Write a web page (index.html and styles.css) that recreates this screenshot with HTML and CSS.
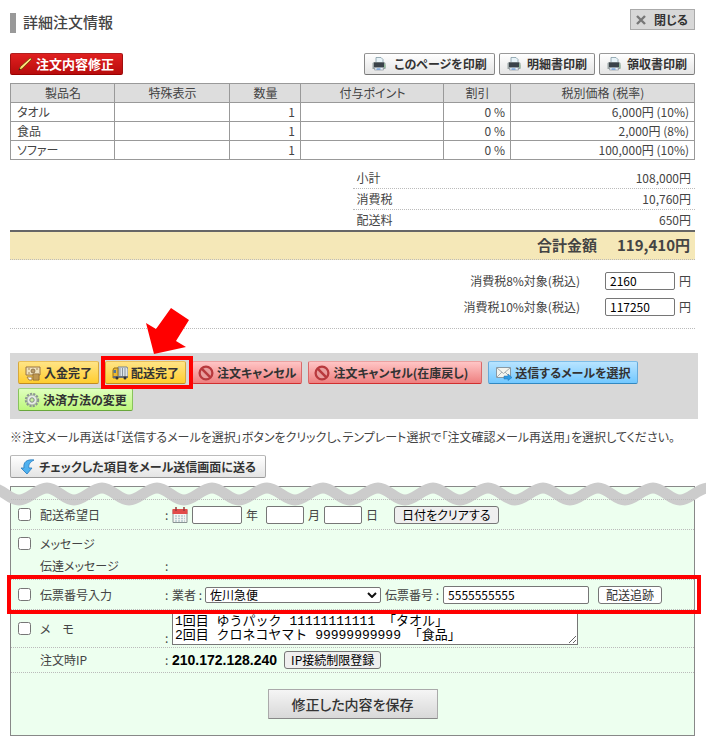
FILE: index.html
```html
<!DOCTYPE html>
<html lang="ja">
<head>
<meta charset="utf-8">
<meta name="viewport" content="width=device-width, initial-scale=1">
<title>詳細注文情報</title>
<link rel="stylesheet" href="styles.css">
</head>
<body>
<svg class="defs" aria-hidden="true">
  <defs>
    <symbol id="printer" viewBox="0 0 14 14">
      <path d="M4 .500h5l2 2V6H4z" fill="#e8f3f8" stroke="#8299a5" stroke-width=".8"/>
      <path d="M.500 6l1.500-1h10l1.500 1v6H.500z" fill="#9aa3a4"/>
      <path d="M2 5.500h10V10H2z" fill="#3a4249"/>
      <path d="M12 6l1.500 2v3H12z" fill="#91b899"/>
      <path d="M3 10.500h8l.5 2.500h-9z" fill="#eef3f6" stroke="#7c8790" stroke-width=".6"/>
      <path d="M4.500 12h4" stroke="#4182d6"/>
    </symbol>
    <symbol id="stop" viewBox="0 0 14 14">
      <circle cx="7" cy="7" r="5.600" fill="#e99d9d" stroke="#b8393d" stroke-width="2"/>
      <path d="M3 3l8 8" stroke="#b8393d" stroke-width="2.200"/>
    </symbol>
  </defs>
</svg>
<main class="page">
  <header class="head">
    <h1 class="title">詳細注文情報</h1>
    <button class="close" type="button"><svg class="close-icon" viewBox="0 0 10 10"><path d="M1 1l8 8M9 1L1 9" stroke="#777" stroke-width="2.400"/></svg>閉じる</button>
  </header>

  <div class="tools">
    <button class="btn red" type="button"><svg class="icon" viewBox="0 0 16 16"><path d="M2 14l1-3L13 2l2 1L5 13z" fill="#f3cd58" stroke="#70400a" stroke-width=".8"/><path d="M4 11.500L13.500 3" stroke="#fff09a"/><path d="M1.500 14.500l2-1-1-1z" fill="#222"/></svg>注文内容修正</button>
    <div class="prints">
      <button class="btn print print-page" type="button"><svg class="icon"><use href="#printer"/></svg>このページを印刷</button>
      <button class="btn print" type="button"><svg class="icon"><use href="#printer"/></svg>明細書印刷</button>
      <button class="btn print" type="button"><svg class="icon"><use href="#printer"/></svg>領収書印刷</button>
    </div>
  </div>

  <table class="items">
    <colgroup><col class="c-name"><col class="c-special"><col class="c-qty"><col class="c-point"><col class="c-off"><col></colgroup>
    <thead><tr><th>製品名</th><th>特殊表示</th><th>数量</th><th>付与ポイント</th><th>割引</th><th>税別価格 (税率)</th></tr></thead>
    <tbody>
      <tr><td>タオル</td><td></td><td>1</td><td></td><td>0 %</td><td>6,000円 (10%)</td></tr>
      <tr><td>食品</td><td></td><td>1</td><td></td><td>0 %</td><td>2,000円 (8%)</td></tr>
      <tr><td>ソファー</td><td></td><td>1</td><td></td><td>0 %</td><td>100,000円 (10%)</td></tr>
    </tbody>
  </table>

  <dl class="sums">
    <div><dt>小計</dt><dd>108,000円</dd></div>
    <div><dt>消費税</dt><dd>10,760円</dd></div>
    <div><dt>配送料</dt><dd>650円</dd></div>
  </dl>
  <div class="total"><span>合計金額</span><span>119,410円</span></div>

  <div class="taxes">
    <div class="tax"><label for="tax8">消費税8%対象(税込)</label><input class="field" id="tax8" value="2160">円</div>
    <div class="tax"><label for="tax10">消費税10%対象(税込)</label><input class="field" id="tax10" value="117250">円</div>
  </div>

  <section class="actions">
    <button class="btn yellow" type="button"><svg class="icon" viewBox="0 0 16 16"><path d="M1 2h14v8H1z" fill="#eee2bf" stroke="#987344"/><path d="M3 4h2m6 0h2M3 8h2" stroke="#a88754"/><circle cx="8" cy="6" r="2" fill="#b99c6b" stroke="#806036" stroke-width=".7"/><path d="M8 9h6v6H8z" fill="#d5ad5f" stroke="#916a30"/><path d="M8 11h6M8 13h6M2 12h5v3H4z" fill="#fff" stroke="#a78145"/></svg>入金完了</button>
    <span class="marked">
      <button class="btn yellow" type="button"><svg class="icon" viewBox="0 0 16 16"><path d="M6 2h9l1 2v8H6z" fill="#dce3e8" stroke="#77828b"/><path d="M8 3v8M10.500 3v8M13 3v8" stroke="#89949d"/><path d="M1 5l1-2h4v10H1z" fill="#ebb833" stroke="#93701d"/><path d="M1.500 5H4v3H1.500z" fill="#52779a"/><path d="M1 11h15v2H1z" fill="#6b7075"/><circle cx="5" cy="13" r="1.500" fill="#333"/><circle cx="13" cy="13" r="1.500" fill="#333"/></svg>配送完了</button>
      <svg class="arrow" viewBox="0 0 43 46"><path d="M25 0L43 12 30 33 40 39 8 46 0 15 10 21z" fill="#f00"/></svg>
    </span>
    <button class="btn pink" type="button"><svg class="icon"><use href="#stop"/></svg>注文キャンセル</button>
    <button class="btn pink restock" type="button"><svg class="icon"><use href="#stop"/></svg>注文キャンセル(在庫戻し)</button>
    <button class="btn blue" type="button"><svg class="icon" viewBox="0 0 16 16"><path d="M.500 2.500h14v10H.500z" fill="#f3f4ee" stroke="#8999a3"/><path d="M1 3l6.500 5.500L14 3M1 12l5-5m8 5L9 7" fill="none" stroke="#a4adb2"/><path d="M8 11h4V9l4 3.500-4 3V14H8z" fill="#2f9be3" stroke="#2175b5" stroke-width=".5"/></svg>送信するメールを選択</button>
    <button class="btn green" type="button"><svg class="icon" viewBox="0 0 16 16"><circle cx="8" cy="8" r="6.200" fill="none" stroke="#8b9592" stroke-width="2" stroke-dasharray="2.200 1.100"/><circle cx="8" cy="8" r="5" fill="#e7ebe8" stroke="#929b98" stroke-width=".8"/><circle cx="8" cy="8" r="2.200" fill="#c8f09c" stroke="#818b88"/></svg>決済方法の変更</button>
  </section>

  <p class="note">※注文メール再送は「送信するメールを選択」ボタンをクリックし、テンプレート選択で「注文確認メール再送用」を選択してください。</p>
  <button class="btn send" type="button"><svg class="icon" viewBox="0 0 16 16"><path d="M14 1C7 0 3 3 4 9H1l6 6 5-6H9C8 6 10 3 14 1z" fill="#4fb1ef" stroke="#2678bd" stroke-width=".8"/></svg>チェックした項目をメール送信画面に送る</button>

  <form class="form">
    <svg class="wave" preserveAspectRatio="none" viewBox="0 0 706 24"><path d="M-8 6C2 6 9 18 19 18S37 6 47 6 64 18 74 18 92 6 102 6 119 18 129 18 147 6 157 6 174 18 184 18 202 6 212 6 229 18 239 18 257 6 267 6 285 18 295 18 313 6 323 6 340 18 350 18 368 6 378 6 395 18 405 18 423 6 433 6 450 18 460 18 478 6 488 6 505 18 515 18 533 6 543 6 560 18 570 18 588 6 598 6 615 18 625 18 643 6 653 6 670 18 680 18 698 6 708 6"/></svg>
    <div class="row date">
      <input type="checkbox" id="k-date"><label for="k-date">配送希望日</label><span>:</span>
      <div class="value">
        <svg class="calendar" viewBox="0 0 16 16"><path d="M1 3h14v12.500H1z" fill="#f4f5f2" stroke="#8a9494"/><path d="M.500 2h15v5H.500z" fill="#e24b49"/><path d="M4 0v4M12 0v4" stroke="#943c3c" stroke-width="1.500"/><path d="M3 9h10M3 11.500h10M3 14h10" stroke="#b5cace" stroke-width="1.500" stroke-dasharray="2 1"/></svg>
        <input class="field year" aria-label="年">年<input class="field month" aria-label="月">月<input class="field day" aria-label="日">日
        <button class="plain clear" type="button">日付をクリアする</button>
      </div>
    </div>
    <div class="row message">
      <input type="checkbox" id="k-msg"><label for="k-msg">メッセージ</label>
      <span class="sub">伝達メッセージ</span><span class="sub-colon">:</span>
    </div>
    <div class="row slip">
      <input type="checkbox" id="k-slip"><label for="k-slip">伝票番号入力</label><span>:</span>
      <div class="value">
        <label for="carrier">業者 :</label>
        <span class="picker">
          <select class="carrier" id="carrier"><option>佐川急便</option></select>
          <svg class="chevron" viewBox="0 0 10 6"><path d="M1 1l4 4 4-4" fill="none" stroke="#111" stroke-width="2"/></svg>
        </span>
        <label for="number">伝票番号 :</label>
        <input class="field number" id="number" value="5555555555">
        <button class="plain track" type="button">配送追跡</button>
      </div>
    </div>
    <div class="row memo">
      <input type="checkbox" id="k-memo"><label for="k-memo">メ　モ</label><span class="low">:</span>
      <textarea class="memo-text" aria-label="メモ" rows="2">1回目 ゆうパック 11111111111 「タオル」
2回目 クロネコヤマト 99999999999 「食品」</textarea>
    </div>
    <div class="row ip">
      <span class="ip-label">注文時IP</span><span>:</span>
      <div class="value"><strong>210.172.128.240</strong><button class="plain" type="button">IP接続制限登録</button></div>
    </div>
    <div class="submit"><button class="save" type="button">修正した内容を保存</button></div>
  </form>
</main>
</body>
</html>
```
FILE: styles.css
```css
* { box-sizing: border-box; }

body {
  margin: 0;
  color: #444;
  background: #fff;
  font: 12px/18px "Noto Sans CJK JP", sans-serif;
  font-feature-settings: "palt";
}

button, input, select, textarea {
  margin: 0;
  font: inherit;
  font-feature-settings: inherit;
}

.defs { position: absolute; width: 0; height: 0; }

.page { padding: 9px 11px 7px 10px; }

.head {
  display: flex;
  justify-content: space-between;
  height: 44px;
}

.title {
  height: 20px;
  margin: 4px 0 0;
  padding-left: 7px;
  border-left: 6px solid #999;
  font-size: 15px;
  font-weight: 500;
  line-height: 18px;
}

.close {
  display: flex;
  align-items: center;
  gap: 8px;
  height: 21px;
  padding: 0 6px 0 5px;
  border: 1px solid #aaa;
  background: #d8d8d8;
  color: #333;
  font-weight: 700;
}

.close-icon { width: 10px; height: 10px; }

.tools, .prints { display: flex; justify-content: space-between; gap: 4px; }

.btn {
  display: flex;
  align-items: center;
  justify-content: center;
  gap: 3px;
  height: 23px;
  padding: 0 5px;
  border: 1px solid;
  border-radius: 2px;
  color: #333;
  font-size: 12px;
  font-weight: 700;
  line-height: 18px;
  white-space: nowrap;
}

.icon { flex: none; width: 16px; height: 16px; }

.red {
  height: 22px;
  padding: 0 8px 0 6px;
  border-color: #b02020 #a01010 #900;
  background: linear-gradient(#e02020, #b80c0c);
  color: #fff;
  font-size: 13px;
}

.print {
  gap: 6px;
  min-width: 96px;
  height: 22px;
  border-color: #999 #888 #777;
  background: linear-gradient(#fff, #e4e4e4);
}

.print-page { gap: 8px; min-width: 131px; }
.print .icon { width: 14px; height: 14px; }

.items {
  width: 100%;
  margin-top: 8px;
  border-collapse: collapse;
  table-layout: fixed;
}

.items th, .items td {
  height: 19px;
  padding: 0 5px 0 6px;
  border: 1px solid #999;
  font-weight: 400;
  line-height: 18px;
  text-align: right;
}

.items th { background: #ddd; text-align: center; }
.items td:first-child { text-align: left; }
.c-name { width: 104px; }
.c-special { width: 115px; }
.c-qty { width: 71px; }
.c-point { width: 143px; }
.c-off { width: 67px; }

.sums { width: 50%; margin: 8px 0 0 auto; }

.sums div {
  display: flex;
  justify-content: space-between;
  height: 21px;
  padding: 0 4px;
  border-bottom: 1px dotted #bbb;
  line-height: 20px;
}

.sums div:last-child { height: 20px; border: 0; }
.sums dd { margin: 0; }

.total {
  display: flex;
  justify-content: flex-end;
  gap: 20px;
  height: 30px;
  padding-right: 5px;
  border-top: 2px solid #666;
  border-bottom: 1px dotted #bbb;
  background: #f5e8b8;
  font-size: 15px;
  font-weight: 700;
  line-height: 25px;
}

.taxes {
  display: grid;
  gap: 7px;
  padding: 11px 4px 12px;
  border-bottom: 1px dotted #bbb;
}

.tax {
  display: flex;
  justify-content: flex-end;
  align-items: center;
  gap: 4px;
  height: 19px;
}

.tax label { margin-right: 21px; }

.field {
  width: 70px;
  height: 18px;
  padding: 0 4px;
  border: 1px solid #767676;
  border-radius: 2px;
  background: #fff;
  color: #000;
}

.actions {
  display: flex;
  flex-wrap: wrap;
  gap: 4px 6px;
  margin: 24px -3px 0 0;
  padding: 8px;
  background: #d8d8d8;
}

.marked { position: relative; }

.marked::after {
  content: "";
  position: absolute;
  inset: -5px -7px -5px -4px;
  border: 4px solid #f00;
}

.arrow {
  position: absolute;
  left: 41px;
  top: -53px;
  z-index: 2;
  width: 43px;
  height: 46px;
}

.yellow { min-width: 81px; border-color: #eac058 #d7a83b #c28c20; background: linear-gradient(#ffe486, #ffcd2e); }
.pink { justify-content: flex-start; min-width: 110px; border-color: #eba0a0 #d96868 #d02f2f; background: linear-gradient(#ffc5c5, #ee8080); }
.restock { min-width: 174px; }
.blue { min-width: 150px; border-color: #7cbde8 #65a9d9 #3188c1; background: linear-gradient(#b8e4ff, #72c8ff); }
.green { border-color: #a2d780 #88c35c #69a63c; background: linear-gradient(#dfffbe, #bdf77c); }
.send { min-width: 256px; border-color: #bbb #aaa #999; background: linear-gradient(#fff, #e4e4e4); }

.note { margin: 9px 0; }

.form {
  position: relative;
  margin-top: 8px;
  padding-top: 12px;
  border: 1px solid #888;
  background: #edffef;
}

.wave {
  position: absolute;
  left: -11px;
  top: -5px;
  width: calc(100% + 23px);
  height: 24px;
  fill: none;
  stroke: #ccc;
  stroke-width: 11px;
}

.row {
  position: relative;
  display: grid;
  grid-template-columns: 29px 125px 7px 1fr;
  align-items: center;
  height: 30px;
  border-top: 1px dotted #bbb;
}

.row input[type="checkbox"] { width: 13px; height: 13px; margin-left: 7px; }
.value { display: flex; align-items: center; white-space: nowrap; }
.calendar { width: 16px; height: 16px; margin-right: 4px; }
.year { width: 50px; margin-right: 4px; }
.month { width: 38px; margin: 0 4px 0 8px; }
.day { width: 38px; margin: 0 4px; }

.plain {
  height: 18px;
  padding: 0 6px;
  border: 1px solid #767676;
  border-radius: 3px;
  background: #efefef;
  color: #000;
  line-height: 16px;
}

.clear { margin-left: 16px; padding: 0 7px; }

.message { grid-template-rows: 22px 22px; align-content: center; height: 50px; }
.sub { grid-column: 2; }
.sub-colon { grid-column: 3; }

.slip::after {
  content: "";
  position: absolute;
  inset: -5px -7px -5px -4px;
  border: 4px solid #f00;
  pointer-events: none;
  z-index: 1;
}

.picker { position: relative; display: flex; margin: 0 4px 0 3px; }

.carrier {
  appearance: none;
  width: 176px;
  height: 16px;
  padding: 0 4px;
  border: 1px solid #767676;
  border-radius: 2px;
  background: #fff;
  color: #000;
  line-height: 14px;
}

.chevron {
  position: absolute;
  right: 4px;
  top: 5px;
  width: 10px;
  height: 6px;
  pointer-events: none;
}

.number { width: 146px; margin: 0 9px 0 4px; }
.track { background: #fff; color: #333; padding: 0 7px; }

.memo { height: 38px; }
.low { align-self: end; }

.memo-text {
  width: 406px;
  height: 32px;
  padding: 1px 2px;
  border: 1px solid #767676;
  background: #fff;
  color: #000;
  font: 13px/14px "Liberation Mono", "Noto Sans CJK JP", monospace;
  font-feature-settings: normal;
  overflow: hidden;
}

.ip { height: 25px; }
.ip-label { grid-column: 2; }
.ip strong { margin-right: 7px; color: #000; font: bold 14px/18px "Liberation Sans", sans-serif; }

.submit { padding: 16px; border-top: 1px dotted #bbb; text-align: center; }

.save {
  min-width: 170px;
  height: 30px;
  padding: 0 16px;
  border: 1px solid #aaa;
  border-bottom-color: #888;
  border-radius: 1px;
  background: linear-gradient(#f5f5f5, #d8d8d8);
  color: #333;
  font-size: 14px;
  font-weight: 500;
}
```
